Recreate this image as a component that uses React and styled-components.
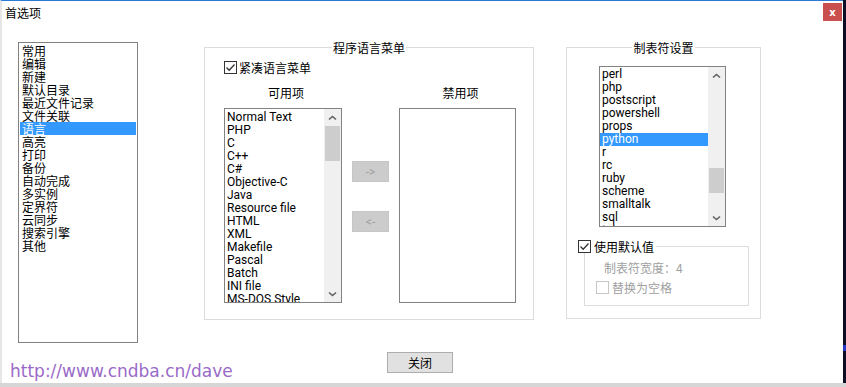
import React from 'react';
import styled, { createGlobalStyle } from 'styled-components';

const Global = createGlobalStyle`
  html, body { margin: 0; padding: 0; }
  body {
    width: 846px; height: 387px; overflow: hidden;
    background: #dcdcdc;
    font-family: "Noto Sans CJK SC", sans-serif;
    font-size: 12px;
    color: #000;
  }
`;

const Screen = styled.div`
  display: flex; flex-direction: column;
  width: 846px; height: 387px;
`;
const TopRow = styled.div`
  display: flex; height: 383px;
`;
const DesktopEdge = styled.div`
  flex: 1;
  background: #0d1024;
  display: flex; flex-direction: column; justify-content: flex-end;
  padding-bottom: 32px;
`;
const EdgeMark = styled.div`
  height: 6px; background: #2438c8;
`;
const BottomStrip = styled.div`
  flex: 1; background: #d6d6d6;
`;

const Window = styled.div`
  position: relative;
  width: 843px; height: 383px; box-sizing: border-box;
  background: #fff;
  border-top: 1px solid #2b7bd6;
  border-left: 2px solid #e6e6e6;
  display: flex; flex-direction: column;
`;

const TitleBar = styled.div`
  display: flex; justify-content: space-between; align-items: flex-start;
  height: 24px; padding: 0 1px 0 3px;
`;
const Title = styled.div`
  margin-top: 5px; font-size: 12px; line-height: 13px;
`;
const CloseBtn = styled.div`
  margin-top: 2px; width: 19px; height: 18px;
  background: #c9504f; color: #fff;
  font-family: "DejaVu Sans", sans-serif; font-weight: bold; font-size: 10px;
  display: flex; align-items: center; justify-content: center;
`;

const Main = styled.div`
  display: flex; align-items: flex-start;
  margin-top: 16px; padding-left: 16px;
`;

const ListBox = styled.div`
  display: flex;
  box-sizing: border-box;
  width: ${p => p.$w}px; height: ${p => p.$h}px;
  margin-top: ${p => p.$mt || 0}px;
  margin-left: ${p => p.$ml || 0}px;
  margin-right: ${p => p.$mr || 0}px;
  border: 1px solid #828282;
  background: #fff;
  overflow: hidden;
`;
const Items = styled.div`
  flex: 1; overflow: hidden; padding: ${p => p.$pad || '0'};
`;
const Item = styled.div`
  height: 13px; line-height: 13px; padding-left: 2px;
  white-space: nowrap;
  font-family: ${p => p.$latin ? '"Roboto", "Noto Sans CJK SC", sans-serif' : '"Noto Sans CJK SC", sans-serif'};
  font-size: 12px;
  background: ${p => p.$sel ? '#3399ff' : 'transparent'};
  color: ${p => p.$sel ? '#fff' : '#000'};
`;

const ScrollBar = styled.div`
  width: 17px; background: #f0f0f0;
  display: flex; flex-direction: column;
`;
const ArrowBtn = styled.div`
  height: 17px; display: flex; align-items: center; justify-content: center;
`;
const Track = styled.div`
  flex: 1; display: flex; flex-direction: column; align-items: center;
`;
const Thumb = styled.div`
  width: 15px; background: #cdcdcd;
  margin-top: ${p => p.$top}px; height: ${p => p.$h}px;
`;

const Chevron = ({ down }) => (
  <svg width="9" height="6" viewBox="0 0 9 6">
    <path d={down ? 'M1 1.5 L4.5 4.5 L8 1.5' : 'M1 4.5 L4.5 1.5 L8 4.5'} fill="none" stroke="#606060" strokeWidth="1.6" />
  </svg>
);

const Scroll = ({ top, h }) => (
  <ScrollBar>
    <ArrowBtn><Chevron /></ArrowBtn>
    <Track><Thumb $top={top} $h={h} /></Track>
    <ArrowBtn><Chevron down /></ArrowBtn>
  </ScrollBar>
);

const Group = styled.fieldset`
  margin: 0; padding: 0; min-width: 0;
  box-sizing: border-box;
  width: ${p => p.$w}px; height: ${p => p.$h}px;
  margin-right: ${p => p.$mr || 0}px;
  border: 1px solid #dcdcdc;
`;
const Legend = styled.legend`
  margin: 0 auto; padding: 0 1px;
  font-size: 12px; line-height: 13px;
`;

const CheckRow = styled.label`
  display: flex; align-items: center; gap: ${p => p.$gap || 2}px;
  height: 13px; line-height: 13px;
  font-size: 12px;
  color: ${p => p.$disabled ? '#a0a0a0' : '#000'};
  margin: ${p => p.$m || '0'};
`;
const Box = styled.span`
  box-sizing: border-box; width: 13px; height: 13px;
  border: 1px solid ${p => p.$disabled ? '#c6c6c6' : '#333'};
  background: #fff;
  display: flex; align-items: center; justify-content: center;
`;
const Check = ({ checked, disabled, label, gap, m }) => (
  <CheckRow $disabled={disabled} $gap={gap} $m={m}>
    <Box $disabled={disabled}>
      {checked && (
        <svg width="11" height="11" viewBox="0 0 11 11">
          <path d="M1.5 5.5 L4.2 8.2 L9.5 2.5" fill="none" stroke="#333" strokeWidth="1.3" />
        </svg>
      )}
    </Box>
    <span>{label}</span>
  </CheckRow>
);

const MidInner = styled.div`
  padding: 7px 0 0 19px;
`;
const Columns = styled.div`
  display: flex; gap: 10px; margin-top: 12px;
`;
const Col = styled.div`
  width: ${p => p.$w}px; display: flex; flex-direction: column;
`;
const ColLabel = styled.div`
  height: 13px; line-height: 13px; text-align: center; margin-bottom: 9px;
  padding-left: 6px;
`;
const BtnCol = styled.div`
  width: 37px; display: flex; flex-direction: column; gap: 29px; padding-top: 75px;
`;
const MoveBtn = styled.div`
  box-sizing: border-box; width: 37px; height: 21px;
  background: #cccccc; border: 1px solid #c6c6c6;
  color: #a0a0a0; font-family: "Roboto", sans-serif; font-size: 12px;
  display: flex; align-items: center; justify-content: center;
`;

const RightInner = styled.div`
  padding: 12px 0 0 0; display: flex; flex-direction: column;
`;
const SubGroup = styled.fieldset`
  margin: 13px 0 0 17px; padding: 0 0 11px 0; min-width: 0;
  box-sizing: border-box; width: 165px;
  border: 1px solid #dcdcdc;
`;
const SubLegend = styled.legend`
  margin-left: -7px; padding: 0 2px 0 0; background: #fff;
`;
const DimText = styled.div`
  height: 13px; line-height: 13px; color: #a0a0a0;
  margin: 8px 0 0 19px; font-size: 12px;
`;

const Footer = styled.div`
  display: flex; justify-content: center; margin-top: 9px; padding-right: 5px;
`;
const CloseButton = styled.div`
  box-sizing: border-box; width: 66px; height: 21px;
  background: #e1e1e1; border: 1px solid #adadad;
  font-size: 12px; line-height: 13px;
  display: flex; align-items: center; justify-content: center;
`;
const Watermark = styled.div`
  position: absolute; left: 8px; top: 360px;
  font-family: "DejaVu Sans", sans-serif; font-size: 17px; line-height: 20px;
  color: #9a6ac8;
`;

const categories = ['常用', '编辑', '新建', '默认目录', '最近文件记录', '文件关联', '语言', '高亮', '打印', '备份', '自动完成', '多实例', '定界符', '云同步', '搜索引擎', '其他'];
const langs = ['Normal Text', 'PHP', 'C', 'C++', 'C#', 'Objective-C', 'Java', 'Resource file', 'HTML', 'XML', 'Makefile', 'Pascal', 'Batch', 'INI file', 'MS-DOS Style'];
const tabLangs = ['perl', 'php', 'postscript', 'powershell', 'props', 'python', 'r', 'rc', 'ruby', 'scheme', 'smalltalk', 'sql', 'tcl'];

export default function App() {
  return (
    <Screen>
      <Global />
      <TopRow>
        <Window>
          <TitleBar>
            <Title>首选项</Title>
            <CloseBtn>x</CloseBtn>
          </TitleBar>
          <Main>
            <ListBox $w={120} $h={301} $mt={1} $mr={66}>
              <Items $pad="1px">
                {categories.map(c => <Item key={c} $sel={c === '语言'}>{c}</Item>)}
              </Items>
            </ListBox>
            <Group $w={330} $h={279} $mr={32}>
              <Legend>程序语言菜单</Legend>
              <MidInner>
                <Check checked label="紧凑语言菜单" />
                <Columns>
                  <Col $w={118}>
                    <ColLabel>可用项</ColLabel>
                    <ListBox $w={118} $h={195}>
                      <Items $pad="2px 0 0 0">
                        {langs.map(l => <Item key={l} $latin>{l}</Item>)}
                      </Items>
                      <Scroll top={0} h={35} />
                    </ListBox>
                  </Col>
                  <BtnCol>
                    <MoveBtn>-&gt;</MoveBtn>
                    <MoveBtn>&lt;-</MoveBtn>
                  </BtnCol>
                  <Col $w={117}>
                    <ColLabel>禁用项</ColLabel>
                    <ListBox $w={117} $h={195}>
                      <Items />
                    </ListBox>
                  </Col>
                </Columns>
              </MidInner>
            </Group>
            <Group $w={195} $h={278}>
              <Legend>制表符设置</Legend>
              <RightInner>
                <ListBox $w={127} $h={161} $ml={32}>
                  <Items $pad="1px 0 0 0">
                    {tabLangs.map(l => <Item key={l} $latin $sel={l === 'python'}>{l}</Item>)}
                  </Items>
                  <Scroll top={84} h={25} />
                </ListBox>
                <SubGroup>
                  <SubLegend>
                    <Check checked label="使用默认值" gap={3} />
                  </SubLegend>
                  <DimText>制表符宽度：4</DimText>
                  <Check disabled label="替换为空格" gap={3} m="7px 0 0 11px" />
                </SubGroup>
              </RightInner>
            </Group>
          </Main>
          <Footer>
            <CloseButton>关闭</CloseButton>
          </Footer>
          <Watermark>http://www.cndba.cn/dave</Watermark>
        </Window>
        <DesktopEdge><EdgeMark /></DesktopEdge>
      </TopRow>
      <BottomStrip />
    </Screen>
  );
}
